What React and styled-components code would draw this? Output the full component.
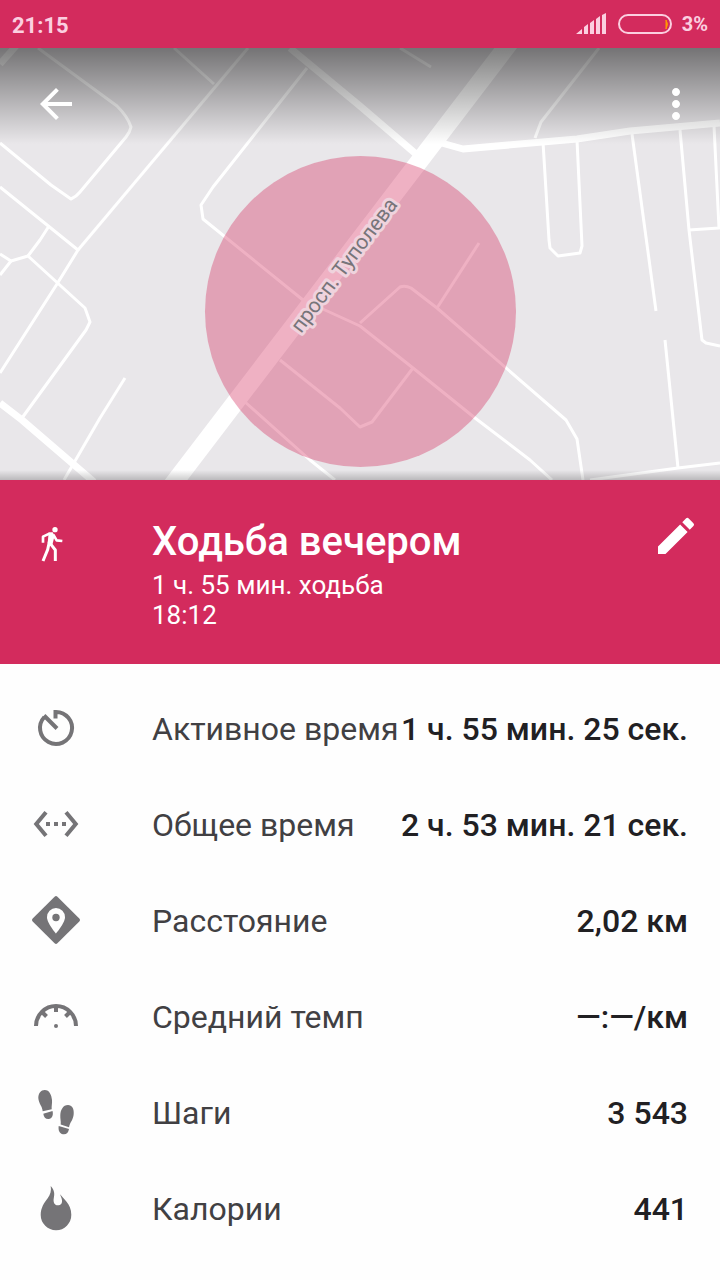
import React from 'react';
import styled, { createGlobalStyle } from 'styled-components';
import {
	MdArrowBack,
	MdEdit,
	MdMoreVert,
	MdSettingsEthernet,
} from 'react-icons/md';

const colors = {
	primary: '#d32b5d',
	status: '#fbcfe0',
	land: '#e9e7ea',
	icon: '#757477',
	label: '#414043',
	value: '#212023',
};

const WalkIcon = () => (
	<svg
		className="walk"
		viewBox="0 0 114 114"
		fill="none"
		stroke="currentColor"
		strokeWidth="8"
		strokeLinejoin="round">
		<circle cx="69" cy="14" r="8" fill="currentColor" stroke="none" />
		<path d="M33 53V35l19-9" />
		<path d="M50 22h12l6 10-7 28-8 4-6-10z" fill="currentColor" stroke="none" />
		<path d="M64 29l10 17 17 2" />
		<path d="M53 46l-6 28-14 34" strokeWidth="9" />
		<path d="M55 56l15 19v33" strokeWidth="9" />
	</svg>
);

const TimerIcon = () => (
	<svg viewBox="0 0 48 48" fill="none" stroke="currentColor" strokeWidth="4">
		<path d="M23.500 14.500V8A16 16 0 1 1 12.400 13" />
		<path d="M12 11.500l13 13" />
	</svg>
);

const DistanceIcon = () => (
	<svg viewBox="0 0 48 48" fill="currentColor">
		<path d="M22.600 .7a2 2 0 0 1 2.800 0L47.300 22.600a2 2 0 0 1 0 2.800L25.400 47.300a2 2 0 0 1-2.800 0L.7 25.400a2 2 0 0 1 0-2.800z" />
		<path
			fill="#fefefe"
			d="M24 12a9 9 0 0 0-9 9.200C15 27 24 37.500 24 37.500S33 27 33 21.200a9 9 0 0 0-9-9.200z"
		/>
		<circle cx="24" cy="21.500" r="3.700" />
	</svg>
);

const PaceIcon = () => (
	<svg viewBox="0 0 48 48" fill="none" stroke="currentColor" strokeWidth="4">
		<path d="M4 34a20 20 0 0 1 40 0" />
		<path d="M24 14v6M10.500 20.500l4 4M37.500 20.500l-4 4" />
		<circle cx="24" cy="34" r="2" fill="currentColor" stroke="none" />
	</svg>
);

const StepsIcon = () => (
	<svg viewBox="0 0 48 48" fill="currentColor">
		<path d="M6.300 10C6.300 5 9 2 12.700 2 17.500 2 19.500 7 20 12c.3 3.500-.6 6-.3 9.300L10.700 23.300C10.300 18 6.800 16 6.300 10z" />
		<path d="M11.300 25.700l9.200-2.700c1.200 4.300-.6 7.600-3.700 8-3 .3-5-1.600-5.500-5.300z" />
		<path d="M41.700 26c.4-5.500-1.700-9-5.700-9-5 0-7.500 5-7.700 10-.2 4 .8 6 .4 9.500l8.300 2.800C38 34 41.300 32 41.700 26z" />
		<path d="M26.700 38l10.300 3c-.6 3.800-2.700 5.700-6 5.200-3.500-.5-4.900-3.700-4.300-8.200z" />
	</svg>
);

const FlameIcon = () => (
	<svg viewBox="0 0 48 48" fill="currentColor">
		<path d="M18.700 2C22.500 6 22.800 10 21.800 14c-.8 4 .5 7.300 4 7.300 3 0 4.600-2 4.200-5-.3-2.400-1.600-4-1.700-6 2 4 11 9 11 20.500A15.300 15.300 0 0 1 8.700 31C8.700 24 12 19 15.500 14.500 18.500 10.500 19.500 6.500 18.700 2z" />
	</svg>
);

const stats = [
	{ label: 'Активное время', value: '1 ч. 55 мин. 25 сек.', Icon: TimerIcon },
	{
		label: 'Общее время',
		value: '2 ч. 53 мин. 21 сек.',
		Icon: MdSettingsEthernet,
	},
	{ label: 'Расстояние', value: '2,02 км', Icon: DistanceIcon },
	{ label: 'Средний темп', value: '—:—/км', Icon: PaceIcon },
	{ label: 'Шаги', value: '3 543', Icon: StepsIcon },
	{ label: 'Калории', value: '441', Icon: FlameIcon },
];

const streets = [
	'M38 48L117 106Q128 117 131 127Q130 132 126 137L80 192Q76 197 71 199L51 185L0 143',
	'M0 187L78 250L57 284L0 373',
	'M248 48L78 250',
	'M174 48L214 84',
	'M307 68L213 187L201 205L203 219L303 300L360 326L413 368L475 418L530 460L552 480',
	'M400 48L431 67',
	'M599 48L541 122L535 138',
	'M543 142L549 240L550 248L558 256L580 253L582 246L577 140',
	'M632 134L656 311',
	'M680 130L689 230L702 340L706 343L720 346',
	'M714 126L719 228L689 230',
	'M665 340L678 468',
	'M590 480L678 468L720 463',
	'M360 323L400 287Q405 285 411 288L437 308L566 420L577 439L583 480',
	'M479 243L437 308',
	'M280 360L340 408L360 427L372 422L413 368',
	'M245 402L310 460L335 480',
	'M0 254L11 261L28 256L85 308L90 322L86 330L22 418',
	'M49 226L40 240L28 256',
	'M11 261L0 275',
	'M125 378L100 418L64 480',
];

const StreetMap = () => (
	<MapCanvas viewBox="0 48 720 432" preserveAspectRatio="xMidYMid slice">
		<g fill="none" stroke="white" strokeWidth="3" strokeLinejoin="round">
			{streets.map((d) => (
				<path d={d} key={d} />
			))}
			<path strokeWidth="7" d="M16 46L0 64" />
			<path strokeWidth="7" d="M290 48L360 106L416 154" />
			<path strokeWidth="7" d="M0 403L22 420L94 482" />
			<path
				strokeWidth="7"
				d="M438 142L463 149L577 139L630 131L720 123"
			/>
			<path strokeWidth="18" d="M511 41L170 488" />
		</g>
		<circle cx="360.500" cy="311.500" r="155.500" fill="rgba(211, 43, 93, .37)" />
		<text transform="translate(301 334) rotate(-53)">просп. Туполева</text>
	</MapCanvas>
);

const App = () => (
	<Page>
		<GlobalStyle />
		<StatusBar>
			<Clock>21:15</Clock>
			<svg width="30" height="22" viewBox="0 0 30 22" fill="currentColor">
				<path d="M0 21l6-5v5zM8 21v-7l4-3v10zM14 21V10l4-3v14zM20 21V6l4-3v18zM26 21V2l4-2v21z" />
			</svg>
			<svg width="54" height="20" viewBox="0 0 54 20" fill="none">
				<rect
					x="1"
					y="1"
					width="52"
					height="18"
					rx="9"
					stroke="currentColor"
					strokeWidth="2"
				/>
				<path d="M48 6q3 4 0 9z" fill="#ff9800" stroke="#ff9800" />
			</svg>
			<span>3%</span>
		</StatusBar>

		<Hero>
			<StreetMap />
			<Shade />
			<Toolbar>
				<IconButton aria-label="Назад">
					<MdArrowBack />
				</IconButton>
				<IconButton aria-label="Ещё">
					<MdMoreVert />
				</IconButton>
			</Toolbar>
		</Hero>

		<Summary>
			<WalkIcon />
			<div className="info">
				<h1>Ходьба вечером</h1>
				<p>1 ч. 55 мин. ходьба</p>
				<p>18:12</p>
			</div>
			<IconButton aria-label="Изменить">
				<MdEdit />
			</IconButton>
		</Summary>

		<Stats>
			{stats.map(({ label, value, Icon }) => (
				<StatRow key={label}>
					<dt>
						<Icon />
						<span>{label}</span>
					</dt>
					<dd>{value}</dd>
				</StatRow>
			))}
		</Stats>
	</Page>
);

const GlobalStyle = createGlobalStyle`
	* {
		box-sizing: border-box;
		margin: 0;
		padding: 0;
	}
	body {
		background: #fefefe;
		font-family: Roboto, 'Noto Sans', sans-serif;
	}
	svg {
		display: block;
		flex-shrink: 0;
	}
`;

const Page = styled.main`
	min-height: 100vh;
	background: #fefefe;
`;

const StatusBar = styled.div`
	height: 48px;
	padding: 0 12px;
	display: flex;
	align-items: center;
	background: ${colors.primary};
	color: ${colors.status};
	font-size: 20px;
	font-weight: 700;
	svg + svg {
		margin: 0 10px 0 12px;
	}
`;

const Clock = styled.time`
	flex: 1;
	padding-top: 2px;
	font-size: 22px;
`;

const Hero = styled.header`
	height: 432px;
	display: grid;
	grid-template: minmax(0, 1fr) / minmax(0, 1fr);
	background: ${colors.land};
	> * {
		grid-area: 1 / 1;
	}
`;

const MapCanvas = styled.svg`
	width: 100%;
	height: 100%;
	text {
		font-size: 21px;
		fill: #77757a;
		stroke: #efd3dd;
		stroke-width: 6px;
		stroke-linejoin: round;
		paint-order: stroke;
	}
`;

const Shade = styled.div`
	background: linear-gradient(rgba(0, 0, 0, 0.5), rgba(0, 0, 0, 0)) top / 100%
			96px no-repeat,
		linear-gradient(rgba(0, 0, 0, 0), rgba(0, 0, 0, 0.2)) bottom / 100% 10px
			no-repeat;
`;

const Toolbar = styled.nav`
	height: 112px;
	padding: 0 20px 0 32px;
	display: flex;
	align-items: center;
	justify-content: space-between;
`;

const IconButton = styled.button`
	width: 48px;
	height: 48px;
	border: none;
	background: none;
	color: white;
	font-size: 48px;
	cursor: pointer;
`;

const Summary = styled.section`
	display: flex;
	align-items: flex-start;
	padding: 32px 20px 34px 32px;
	background: ${colors.primary};
	color: white;
	.walk {
		width: 38px;
		height: 38px;
		margin: 13px 82px 0 0;
	}
	.info {
		flex: 1;
		min-width: 0;
		font-size: 26px;
		line-height: 30px;
	}
	h1 {
		padding-top: 2px;
		font-size: 40px;
		font-weight: 500;
		line-height: 56px;
	}
`;

const Stats = styled.dl`
	padding: 16px 32px 24px;
	font-size: 32px;
`;

const StatRow = styled.div`
	height: 96px;
	display: flex;
	align-items: center;
	justify-content: space-between;
	white-space: nowrap;
	dt {
		display: flex;
		align-items: center;
		gap: 72px;
		color: ${colors.label};
	}
	dt svg {
		width: 48px;
		height: 48px;
		color: ${colors.icon};
	}
	dt span,
	dd {
		padding-top: 2px;
	}
	dd {
		color: ${colors.value};
		font-weight: 500;
	}
`;

export default App;
